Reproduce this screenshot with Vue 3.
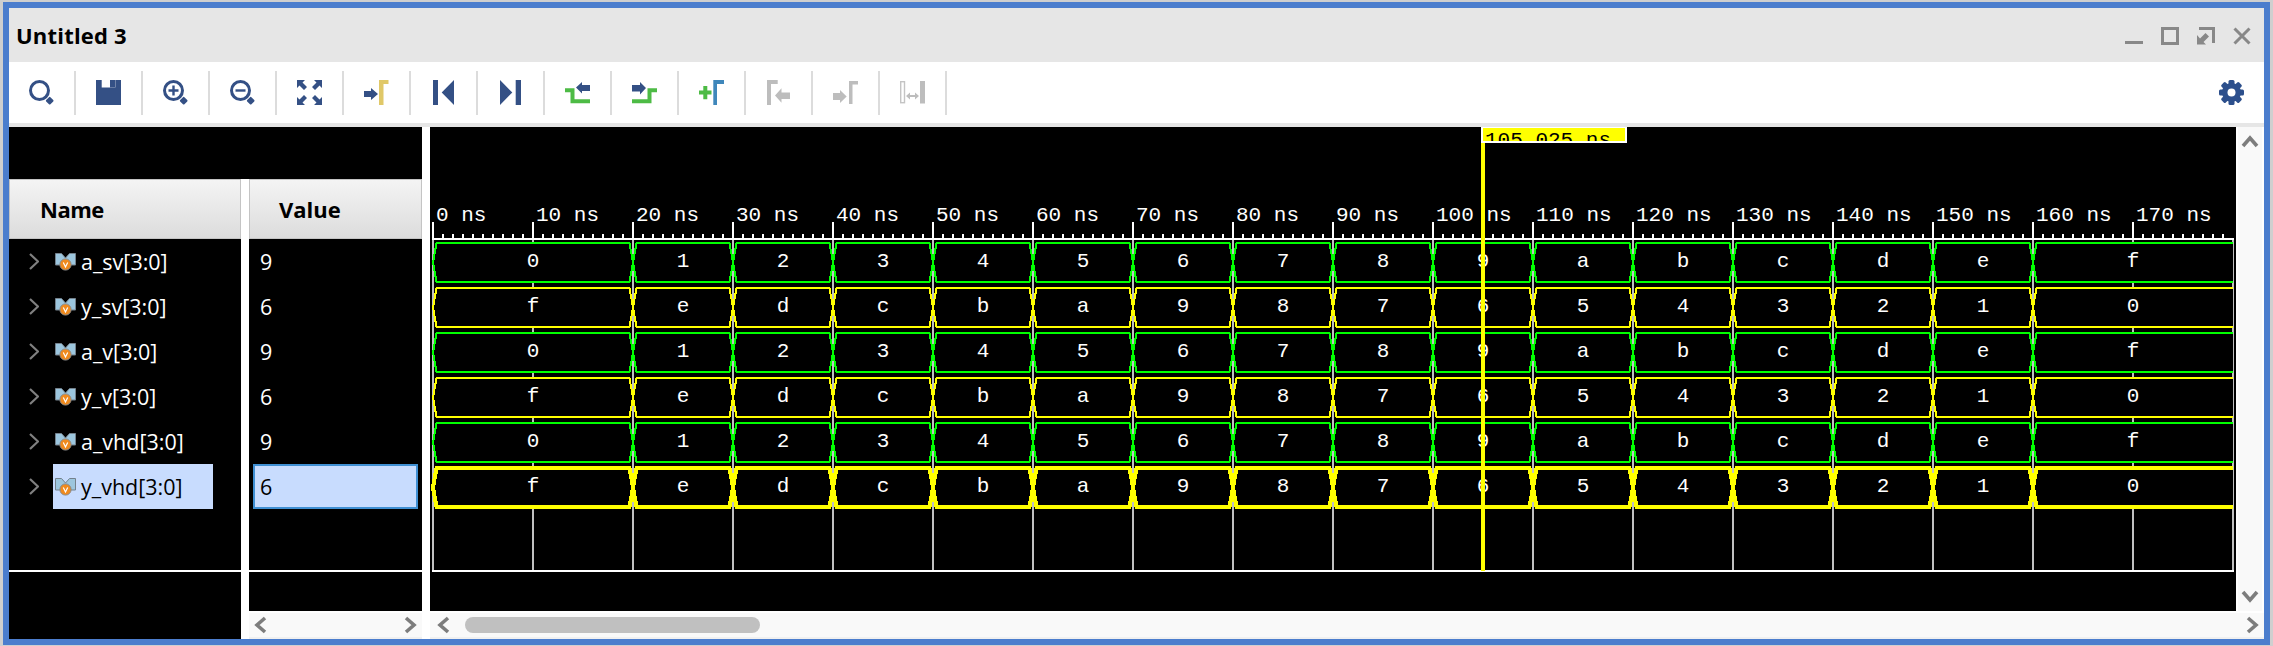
<template>
  <div class="window">
    <div class="titlebar">
      <span class="title">Untitled 3</span>
      <div class="win-controls">
        <svg width="18" height="18" viewBox="0 0 18 18"><rect y="14" width="18" height="3" /></svg>
        <svg width="18" height="18" viewBox="0 0 18 18"><path d="M1.5 1.5H16.5V16.5H1.5Z" class="win-line" /></svg>
        <svg width="18" height="18" viewBox="0 0 18 18"><path d="M2 1.5H16.5V16" class="win-line" /><path d="M0 8V17.5H9L6.5 15L12 9.5L8.5 6L3 11.5Z" /></svg>
        <svg width="18" height="18" viewBox="0 0 18 18"><path d="M1.5 1.5L16.5 16.5M16.5 1.5L1.5 16.5" class="win-line" /></svg>
      </div>
    </div>

    <div class="toolbar">
      <div class="tool"><svg viewBox="0 0 25 25"><circle cx="10.5" cy="10.5" r="9" class="ring" /><rect x="17.7" y="17.7" width="6" height="6" rx="1" transform="rotate(45 20.7 20.7)" class="navy" /></svg></div>
      <div class="tool"><svg viewBox="0 0 25 25"><path d="M0 0H25V25H0Z" class="navy" /><rect x="5.7" width="13.6" height="7.5" fill="#fff" /><rect x="14" width="5" height="7.5" class="navy" /></svg></div>
      <div class="tool"><svg viewBox="0 0 25 25"><circle cx="10.5" cy="10.5" r="9" class="ring" /><path d="M5.5 10.5H15.5M10.5 5.5V15.5" class="thin" /><rect x="17.7" y="17.7" width="6" height="6" rx="1" transform="rotate(45 20.7 20.7)" class="navy" /></svg></div>
      <div class="tool"><svg viewBox="0 0 25 25"><circle cx="10.5" cy="10.5" r="9" class="ring" /><path d="M5.5 10.5H15.5" class="thin" /><rect x="17.7" y="17.7" width="6" height="6" rx="1" transform="rotate(45 20.7 20.7)" class="navy" /></svg></div>
      <div class="tool"><svg viewBox="0 0 25 25">
        <g v-for="a in [0, 90, 180, 270]" :key="a" :transform="`rotate(${a} 12.5 12.5)`">
          <path d="M0 0H8L5.5 2.5L10 7L7 10L2.5 5.5L0 8Z" class="navy" />
        </g>
      </svg></div>
      <div class="tool"><svg viewBox="0 0 25 25"><path d="M0 11H7V8L14 14L7 20V17H0Z" class="navy" /><path d="M15 25V0H24.5V4H19.5V25Z" fill="#e0c868" /></svg></div>
      <div class="tool"><svg viewBox="0 0 25 25"><path d="M2 0H7V25H2ZM23 0V25L10.7 12.5Z" class="navy" /></svg></div>
      <div class="tool"><svg viewBox="0 0 25 25"><path d="M2 0V25L14.3 12.5ZM17.7 0H23V25H17.7Z" class="navy" /></svg></div>
      <div class="tool"><svg viewBox="0 0 25 25"><path d="M0 10.3H7.5V21.3H25" class="edge" /><path d="M11 7.5L17 2V5H25V11H17V13.5Z" class="navy" /></svg></div>
      <div class="tool"><svg viewBox="0 0 25 25"><path d="M0 21.3H17.5V10.3H25" class="edge" /><path d="M0 5H8V2L14 8L8 14.5V11.5H0Z" class="navy" /></svg></div>
      <div class="tool"><svg viewBox="0 0 25 25"><path d="M0 12.6H12.5M6.3 6V19.3" class="edge" /><path d="M14.3 25V0H25V4H18V25Z" fill="#3f87bb" /></svg></div>
      <div class="tool"><svg viewBox="0 0 25 25"><path d="M1 25V0H11.7V4H5V25Z" class="off" /><path d="M9 15.5L15.5 8.3V12.5H24V19H15.5V22.7Z" class="off" /></svg></div>
      <div class="tool"><svg viewBox="0 0 25 25"><path d="M0 13H7V10L13.7 16.5L7 23V20H0Z" class="off" /><path d="M16 24V1H25V4.5H19.5V24Z" class="off" /></svg></div>
      <div class="tool"><svg viewBox="0 0 25 25"><rect x="0.7" y="1.7" width="3.8" height="21" fill="none" stroke="#c4c4c4" stroke-width="1.4" /><rect x="20" y="1" width="5" height="22.5" class="off" /><path d="M6 16L10 12.5V15H15V12.5L19 16L15 19.5V17H10V19.5Z" class="off" /></svg></div>
      <svg class="gear" viewBox="0 0 25 25">
        <rect v-for="a in [0, 45, 90, 135]" :key="a" x="9.5" y="0" width="6" height="25" rx="1.5" :transform="`rotate(${a} 12.5 12.5)`" class="navy-gear" />
        <circle cx="12.5" cy="12.5" r="9.5" class="navy-gear" />
        <circle cx="12.5" cy="12.5" r="4" fill="#fff" />
      </svg>
    </div>

    <div class="main">
      <div class="left">
        <div class="left-top"></div>
        <div class="columns">
          <div class="col col-name">
            <div class="col-head">Name</div>
            <div class="rows">
              <div v-for="(s, i) in signals" :key="s.name" class="row">
                <svg class="caret" width="10" height="17" viewBox="0 0 10 17"><path d="M1 1L9 8.5L1 16" /></svg>
                <div class="label" :class="{ selected: i === 5 }">
                  <svg class="medal" width="21" height="18" viewBox="0 0 21 18">
                    <path d="M0.5 0.5H6.5L10.5 5L14.5 0.5H20.5V12H0.5Z" fill="#9cc6de" stroke="#74818c" />
                    <circle cx="10.5" cy="11.5" r="5.6" fill="#f08a1d" stroke="#8a8a8a" />
                    <path d="M8.3 9.5L10.5 14L12.7 9.5" fill="none" stroke="#fff" stroke-width="1.2" />
                  </svg>
                  <span>{{ s.name }}</span>
                </div>
              </div>
            </div>
          </div>
          <div class="col col-value">
            <div class="col-head">Value</div>
            <div class="rows">
              <div v-for="(s, i) in signals" :key="s.name" class="row value-row" :class="{ selected: i === 5 }">{{ s.value }}</div>
            </div>
            <div class="col-fill"></div>
            <div class="hscroll">
              <svg class="arrow" viewBox="0 0 20 20"><path d="M13 3L5 10L13 17" /></svg>
              <svg class="arrow" viewBox="0 0 20 20"><path d="M7 3L15 10L7 17" /></svg>
            </div>
          </div>
        </div>
      </div>

      <div class="right">
        <div class="wave-row">
          <svg class="wave" width="1806" height="484" viewBox="430 127 1806 484" shape-rendering="crispEdges">
            <!-- grid behind the lanes -->
            <rect v-for="x in majors" :key="'g' + x" :x="x - 1" y="238" width="2" height="333" fill="#c0c0c0" />
            <rect x="432" y="222" width="2" height="17" fill="#fff" />
            <rect v-for="x in majors.slice(1, -1)" :key="'m' + x" :x="x - 1" y="222" width="2" height="17" fill="#fff" />
            <rect v-for="x in minors" :key="'t' + x" :x="x - 1" y="234" width="2" height="4" fill="#fff" />
            <rect x="432" y="238" width="1802" height="2" fill="#fff" />
            <text v-for="(x, i) in labelTicks" :key="'l' + x" :x="x + 3" y="221" class="mono">{{ i * 10 }} ns</text>

            <g v-for="(lane, i) in lanes" :key="i">
              <g v-for="seg in lane.segs" :key="seg.key">
                <path :d="seg.d" fill="#000" :stroke="lane.color" :stroke-width="lane.width" />
                <text :x="seg.mid" :y="lane.base" class="mono" text-anchor="middle">{{ seg.text }}</text>
              </g>
            </g>

            <rect x="432" y="570" width="1802" height="2" fill="#fff" />

            <!-- cursor -->
            <rect x="1481" y="127" width="4" height="444" fill="#ff0" />
            <rect x="1481" y="127" width="146" height="16" fill="#fff" />
            <rect x="1483" y="128" width="142" height="13" fill="#ff0" />
            <svg x="1483" y="128" width="142" height="13" viewBox="1483 128 142 13">
              <text x="1485" y="146" class="mono cursor-text">105.025 ns</text>
            </svg>
          </svg>
          <div class="vscroll">
            <svg class="arrow" viewBox="0 0 20 20"><path d="M3 14L10 6L17 14" /></svg>
            <svg class="arrow" viewBox="0 0 20 20"><path d="M3 6L10 14L17 6" /></svg>
          </div>
        </div>
        <div class="hscroll wave-scroll">
          <svg class="arrow" viewBox="0 0 20 20"><path d="M13 3L5 10L13 17" /></svg>
          <div class="thumb"></div>
          <svg class="arrow arrow-end" viewBox="0 0 20 20"><path d="M7 3L15 10L7 17" /></svg>
        </div>
      </div>
    </div>
  </div>
</template>

<script setup>
const signals = [
  { name: 'a_sv[3:0]', value: '9' },
  { name: 'y_sv[3:0]', value: '6' },
  { name: 'a_v[3:0]', value: '9' },
  { name: 'y_v[3:0]', value: '6' },
  { name: 'a_vhd[3:0]', value: '9' },
  { name: 'y_vhd[3:0]', value: '6' }
]

// 100px per 10 ns, time zero at x=433
const majors = Array.from({ length: 19 }, (_, i) => 433 + i * 100)
const labelTicks = majors.slice(0, 18)
const minors = Array.from({ length: 181 }, (_, i) => 433 + i * 10).filter((x) => (x - 433) % 100 !== 0)

const edges = [433, 633, 733, 833, 933, 1033, 1133, 1233, 1333, 1433, 1533, 1633, 1733, 1833, 1933, 2033, 2233]
const up = '0123456789abcdef'.split('')
const down = 'fedcba9876543210'.split('')

const lanes = [0, 1, 2, 3, 4, 5].map((n) => {
  const top = 243 + n * 45
  const bottom = top + 39
  const center = top + 19.5
  const text = n % 2 === 0 ? up : down
  const segs = text.map((t, i) => {
    const a = edges[i]
    const b = edges[i + 1]
    const last = i === text.length - 1
    // the last value runs off the end of the view, so its shape stays open on the right
    const d = last
      ? `M${b} ${top}H${a + 3.5}L${a} ${center}L${a + 3.5} ${bottom}H${b}`
      : `M${b - 3.5} ${top}H${a + 3.5}L${a} ${center}L${a + 3.5} ${bottom}H${b - 3.5}L${b} ${center}Z`
    return { key: t, text: t, mid: (a + b) / 2, d }
  })
  return {
    segs,
    base: center + 4.5,
    color: n % 2 === 0 ? '#00ff00' : '#ffff00',
    width: n === 5 ? 4 : 2
  }
})
</script>

<style>
html, body {
  margin: 0;
  background: #cfcfcf;
}
</style>

<style scoped>
.window {
  width: 2255px;
  height: 631px;
  margin: 2px 3px 1px;
  border: 6px solid #4b7dcd;
  background: #fff;
  display: flex;
  flex-direction: column;
  font-family: "Open Sans", "Noto Sans", sans-serif;
}

.titlebar {
  height: 54px;
  flex: none;
  background: #e6e6e6;
  display: flex;
  align-items: center;
  justify-content: space-between;
  padding: 0 13px 0 7px;
}

.title {
  font-size: 22px;
  font-weight: 700;
  letter-spacing: 0.2px;
  color: #000;
}

.win-controls {
  display: flex;
  gap: 18px;
  margin-top: 2px;
}

.win-controls svg {
  fill: #888;
}

.win-line {
  fill: none;
  stroke: #888;
  stroke-width: 3;
}

.toolbar {
  height: 61px;
  flex: none;
  display: flex;
  align-items: center;
  border-bottom: 4px solid #e6e6e6;
  box-sizing: content-box;
}

.tool {
  width: 67px;
  height: 44px;
  box-sizing: border-box;
  border-right: 2px solid #dcdcdc;
  padding-right: 0;
  display: flex;
  align-items: center;
  justify-content: center;
}

.tool svg {
  width: 25px;
  height: 25px;
}

.gear {
  width: 25px;
  height: 25px;
  margin-left: auto;
  margin-right: 20px;
}

.navy { fill: #345085; }
.navy-gear { fill: #2c4f8c; }
.off { fill: #bdbdbd; }
.ring { fill: none; stroke: #345085; stroke-width: 3; }
.thin { fill: none; stroke: #345085; stroke-width: 2.4; }
.edge { fill: none; stroke: #4dbb45; stroke-width: 4; }

.main {
  flex: 1;
  display: flex;
  min-height: 0;
}

.left {
  width: 413px;
  flex: none;
  margin-right: 8px;
  display: flex;
  flex-direction: column;
}

.left-top {
  height: 52px;
  flex: none;
  background: #000;
}

.columns {
  flex: 1;
  display: flex;
  gap: 8px;
  min-height: 0;
}

.col {
  background: #000;
  display: flex;
  flex-direction: column;
}

.col-name { width: 232px; }
.col-value { width: 173px; }

.col-head {
  height: 60px;
  flex: none;
  box-sizing: border-box;
  border: 1px solid #c4c4c4;
  background: linear-gradient(#f4f4f4, #dcdcdc);
  display: flex;
  align-items: center;
  font-size: 22px;
  font-weight: 700;
  color: #000;
}

.col-name .col-head { padding-left: 30px; letter-spacing: -0.5px; }
.col-value .col-head { padding-left: 29px; }

.rows {
  height: 333px;
  flex: none;
  box-sizing: border-box;
  border-bottom: 2px solid #fff;
}

.row {
  height: 45px;
  display: flex;
  align-items: center;
  color: #fff;
  font-size: 21.5px;
}

.caret {
  margin-left: 20px;
  margin-right: 14px;
  flex: none;
}

.caret path {
  fill: none;
  stroke: #808080;
  stroke-width: 2.2;
}

.label {
  height: 45px;
  padding-left: 2px;
  width: 160px;
  box-sizing: border-box;
  display: flex;
  align-items: center;
}

.label.selected {
  background: #c8dcfe;
  color: #000;
}

.medal {
  flex: none;
  margin-right: 5px;
}

.value-row {
  margin-left: 4px;
  width: 165px;
  box-sizing: border-box;
  border: 2px solid transparent;
  padding-left: 5px;
}

.value-row.selected {
  background: #c8dcfe;
  border-color: #3f8fd2;
  color: #000;
}

.col-fill {
  flex: 1;
}

.hscroll {
  height: 28px;
  flex: none;
  box-sizing: border-box;
  background: #f9f9f9;
  border-top: 2px solid #fff;
  border-bottom: 2px solid #f0f0f0;
  display: flex;
  align-items: center;
  justify-content: space-between;
  padding: 0 3px;
}

.arrow {
  width: 20px;
  height: 20px;
  flex: none;
}

.arrow path {
  fill: none;
  stroke: #7d7d7d;
  stroke-width: 3.6;
}

.right {
  flex: 1;
  min-width: 0;
  display: flex;
  flex-direction: column;
}

.wave-row {
  flex: 1;
  min-height: 0;
  display: flex;
}

.wave {
  display: block;
  flex: none;
  background: #000;
}

.mono {
  font-family: "Liberation Mono", monospace;
  font-size: 21px;
  fill: #fff;
}

.cursor-text {
  fill: #000;
}

.vscroll {
  flex: 1;
  margin-left: 2px;
  margin-right: 2px;
  background: #f9f9f9;
  display: flex;
  flex-direction: column;
  align-items: center;
  justify-content: space-between;
  padding: 5px 0;
}

.wave-scroll {
  justify-content: flex-start;
  padding: 0 3px 0 5px;
}

.thumb {
  width: 295px;
  height: 16px;
  margin-left: 10px;
  border-radius: 8px;
  background: #c0c0c0;
}

.arrow-end {
  margin-left: auto;
}
</style>
